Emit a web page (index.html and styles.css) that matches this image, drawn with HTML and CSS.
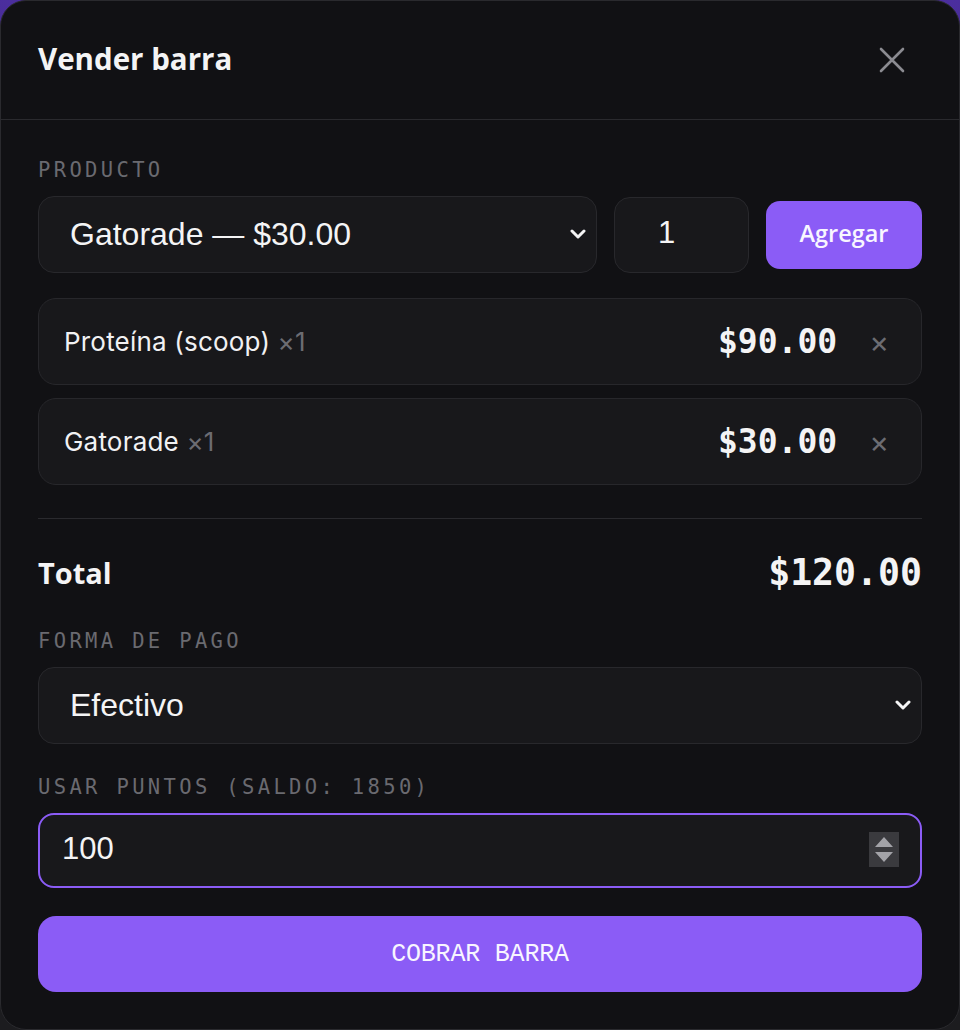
FILE: index.html
```html
<!DOCTYPE html>
<html lang="es">
<head>
<meta charset="utf-8">
<title>Vender barra</title>
<link rel="stylesheet" href="styles.css">
</head>
<body>
<div class="modal">
  <header class="modal-head">
    <h1 class="title">Vender barra</h1>
    <button class="close" aria-label="Cerrar">
      <svg viewBox="0 0 28 28" width="28" height="28"><path d="M3 3 L25 25 M25 3 L3 25" stroke="currentColor" stroke-width="2.6" stroke-linecap="round" fill="none"/></svg>
    </button>
  </header>
  <div class="modal-body">
    <div class="label first">PRODUCTO</div>
    <div class="add-row">
      <div class="select-wrap grow">
        <select class="select"><option>Gatorade — $30.00</option></select>
        <svg class="chev" viewBox="0 0 16 11" width="16" height="11"><path d="M2 2 L8 8 L14 2" stroke="currentColor" stroke-width="3" fill="none" stroke-linecap="round" stroke-linejoin="round"/></svg>
      </div>
      <input class="qty" type="text" value="1">
      <button class="add-btn">Agregar</button>
    </div>

    <div class="items">
      <div class="item">
        <span class="item-name">Proteína (scoop) <span class="mult">×1</span></span>
        <span class="item-price">$90.00</span>
        <span class="item-x">×</span>
      </div>
      <div class="item">
        <span class="item-name">Gatorade <span class="mult">×1</span></span>
        <span class="item-price">$30.00</span>
        <span class="item-x">×</span>
      </div>
    </div>

    <hr class="divider">

    <div class="total-row">
      <span class="total-label">Total</span>
      <span class="total-value">$120.00</span>
    </div>

    <div class="label pay">FORMA DE PAGO</div>
    <div class="select-wrap">
      <select class="select"><option>Efectivo</option></select>
      <svg class="chev" viewBox="0 0 16 11" width="16" height="11"><path d="M2 2 L8 8 L14 2" stroke="currentColor" stroke-width="3" fill="none" stroke-linecap="round" stroke-linejoin="round"/></svg>
    </div>

    <div class="label pts">USAR PUNTOS (SALDO: 1850)</div>
    <div class="points-wrap">
      <input class="points" type="text" value="100">
      <span class="spinner">
        <svg viewBox="0 0 30 35" width="30" height="35"><path d="M6 15 L15 5 L24 15 Z M6 20 L24 20 L15 30 Z" fill="#a3a3a8"/></svg>
      </span>
    </div>

    <button class="pay-btn">COBRAR BARRA</button>
  </div>
</div>
</body>
</html>
```

FILE: styles.css
```css
* { box-sizing: border-box; }

html, body {
  margin: 0;
  padding: 0;
}

body {
  width: 960px;
  height: 1030px;
  background: linear-gradient(180deg, #4b2e9e 0%, #3a2773 20%, #1d1c22 55%, #1c1c1f 100%);
  font-family: Inter, "Noto Sans", sans-serif;
  color: #f4f4f5;
}

.modal {
  width: 960px;
  height: 1030px;
  background: #111114;
  border: 1px solid #2a2a2e;
  border-radius: 26px;
  display: flex;
  flex-direction: column;
}

.modal-head {
  height: 119px;
  border-bottom: 1px solid #2a2a2e;
  display: flex;
  align-items: center;
  justify-content: space-between;
  padding: 0 53px 0 37px;
  flex-shrink: 0;
}

.title {
  margin: 0 0 3px 0;
  font-family: "Open Sans", "Noto Sans", sans-serif;
  font-weight: 700;
  font-size: 29.5px;
  color: #f4f4f5;
}

.close {
  background: none;
  border: 0;
  padding: 0;
  color: #8b8b91;
  display: flex;
  margin-bottom: 1px;
}

.modal-body {
  padding: 0 37px;
  display: flex;
  flex-direction: column;
}

.label {
  font-family: "DejaVu Sans Mono", monospace;
  font-size: 20.5px;
  line-height: 22px;
  letter-spacing: 3.35px;
  color: #6a6a70;
  margin-bottom: 15px;
}

.label.first { margin-top: 39px; }
.label.pay { margin-top: 36px; }
.label.pts { margin-top: 32px; }

.add-row {
  display: flex;
  align-items: center;
  gap: 17px;
}

.select-wrap {
  position: relative;
  display: flex;
}

.select-wrap.grow {
  flex: 1;
}

.select {
  appearance: none;
  -webkit-appearance: none;
  width: 100%;
  height: 77px;
  background: #18181b;
  border: 1px solid #28282c;
  border-radius: 16px;
  color: #f4f4f5;
  font-family: "Liberation Sans", Arial, sans-serif;
  font-size: 32px;
  padding: 0 40px 2px 31px;
  outline: none;
}

.chev {
  position: absolute;
  right: 11px;
  top: 33px;
  color: #f4f4f5;
}

.qty {
  width: 135px;
  height: 76px;
  background: #18181b;
  border: 1px solid #28282c;
  border-radius: 16px;
  color: #f4f4f5;
  font-family: "Liberation Sans", Arial, sans-serif;
  font-size: 31px;
  padding: 0 0 4px 43px;
  outline: none;
}

.add-btn {
  width: 156px;
  height: 68px;
  background: #8b5cf6;
  border: 0;
  border-radius: 14px;
  color: #f8f6ff;
  font-family: "Open Sans", "Noto Sans", sans-serif;
  font-weight: 600;
  font-size: 23.5px;
  padding: 0 0 3px 0;
}

.items {
  display: flex;
  flex-direction: column;
  gap: 13px;
  margin-top: 25px;
}

.item {
  height: 87px;
  background: #18181b;
  border: 1px solid #27272b;
  border-radius: 18px;
  display: flex;
  align-items: center;
  padding: 0 32px 0 25px;
}

.item-name {
  flex: 1;
  font-size: 26px;
  letter-spacing: 0.2px;
  color: #f1f1f3;
}

.mult {
  color: #6c6c72;
}

.item-price {
  font-family: "DejaVu Sans Mono", monospace;
  font-weight: 700;
  font-size: 33px;
  color: #f4f4f5;
  margin-right: 32px;
}

.item-x {
  font-size: 30px;
  color: #6c6c72;
  line-height: 1;
}

.divider {
  border: 0;
  border-top: 1px solid #2a2a2e;
  margin: 33px 0 0 0;
  width: 100%;
}

.total-row {
  display: flex;
  align-items: center;
  justify-content: space-between;
  margin-top: 31px;
  height: 44px;
}

.total-label {
  font-family: "Open Sans", "Noto Sans", sans-serif;
  font-weight: 700;
  font-size: 29px;
  color: #f4f4f5;
}

.total-value {
  font-family: "DejaVu Sans Mono", monospace;
  font-weight: 700;
  font-size: 36.5px;
  color: #f4f4f5;
}

.points-wrap {
  position: relative;
  display: flex;
}

.points {
  width: 100%;
  height: 75px;
  background: #18181b;
  border: 2px solid #8b5cf6;
  border-radius: 16px;
  color: #f4f4f5;
  font-family: "Liberation Sans", Arial, sans-serif;
  font-size: 31px;
  padding: 0 0 4px 22px;
  outline: none;
}

.spinner {
  position: absolute;
  right: 23px;
  top: 19px;
  width: 30px;
  height: 35px;
  background: #3a3a3e;
  display: flex;
}

.pay-btn {
  margin-top: 28px;
  height: 76px;
  width: 100%;
  background: #8b5cf6;
  border: 0;
  border-radius: 18px;
  color: #f8f6ff;
  font-family: "Liberation Mono", monospace;
  font-size: 25px;
  letter-spacing: -0.2px;
}
```
